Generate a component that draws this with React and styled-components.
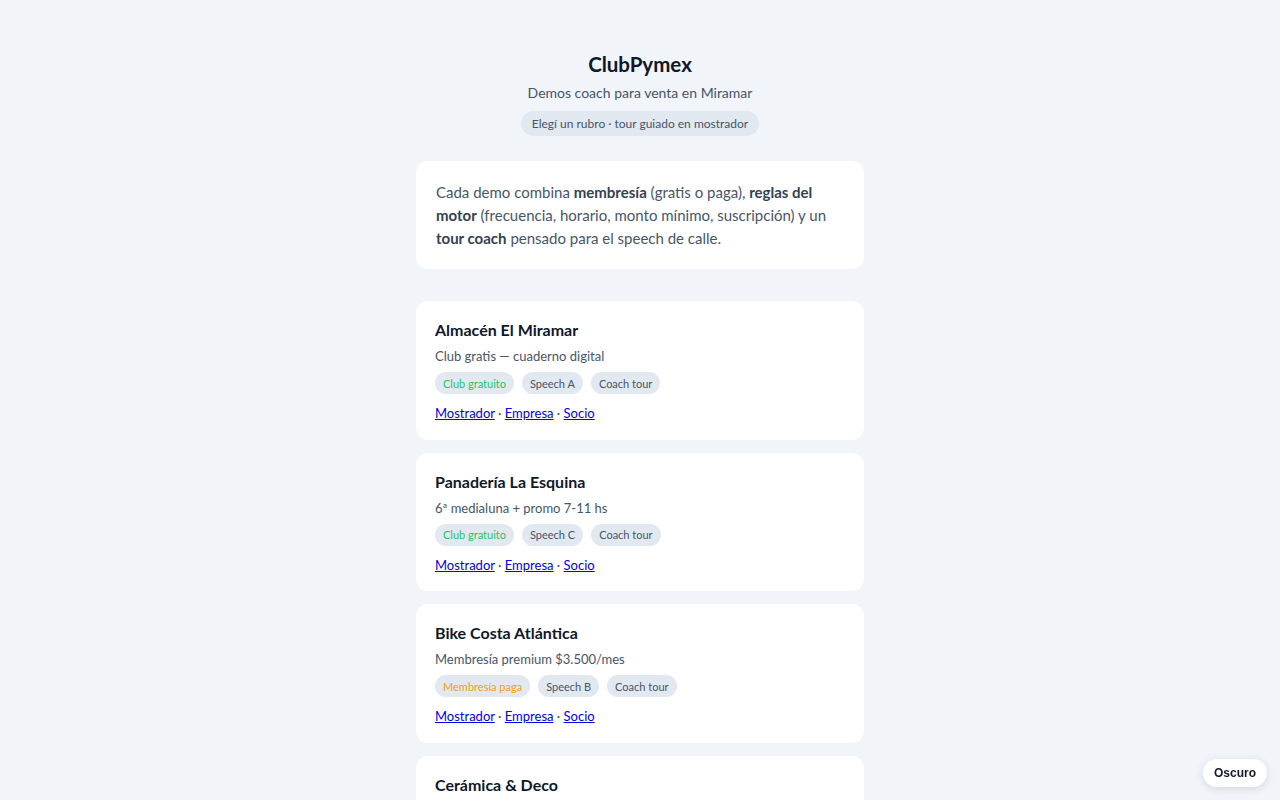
import React from "react";
import styled, { createGlobalStyle } from "styled-components";

const Global = createGlobalStyle`
  html, body { margin: 0; padding: 0; background: #f1f4f9; }
  body { font-family: Lato, "Noto Sans", sans-serif; color: #0f172a; }
`;

const Page = styled.main`
  width: 448px;
  margin: 0 auto;
  padding: 52px 0 40px;
`;

const Header = styled.header`
  display: flex;
  flex-direction: column;
  align-items: center;
`;

const Title = styled.h1`
  margin: 0;
  font-size: 20.5px;
  line-height: 24px;
  font-weight: 700;
  color: #0f172a;
`;

const Subtitle = styled.p`
  margin: 8px 0 0;
  font-size: 14px;
  line-height: 18px;
  color: #475569;
`;

const Pill = styled.span`
  margin-top: 9px;
  height: 25px;
  display: inline-flex;
  align-items: center;
  padding: 0 11px;
  border-radius: 999px;
  background: #e2e8f0;
  color: #475569;
  font-size: 12px;
`;

const Intro = styled.section`
  margin-top: 25px;
  background: #fff;
  border-radius: 12px;
  padding: 20px 20px 19px;
  font-size: 15px;
  line-height: 23px;
  color: #475569;
  b { color: #334155; font-weight: 700; }
`;

const List = styled.div`
  margin-top: 32px;
  display: flex;
  flex-direction: column;
  gap: 13px;
`;

const Card = styled.article`
  background: #fff;
  border-radius: 12px;
  padding: 18px 19px 17.5px;
`;

const CardTitle = styled.h2`
  margin: 0;
  font-size: 16px;
  line-height: 22px;
  font-weight: 700;
  color: #0f172a;
`;

const CardSub = styled.p`
  margin: 6px 0 0;
  font-size: 13px;
  line-height: 18px;
  color: #475569;
`;

const Tags = styled.div`
  margin-top: 7px;
  display: flex;
  gap: 8px;
`;

const toneColor = { green: "#22c55e", orange: "#f59e0b", gray: "#475569" };

const Tag = styled.span`
  height: 22px;
  display: inline-flex;
  align-items: center;
  padding: 0 8px;
  border-radius: 999px;
  background: #e2e8f0;
  font-size: 11px;
  color: ${(p) => toneColor[p.$tone] || toneColor.gray};
`;

const Links = styled.div`
  margin-top: 10px;
  font-size: 13px;
  line-height: 18px;
  color: #475569;
  a { color: #0000ee; text-decoration: underline; }
`;

const ThemeToggle = styled.button`
  position: fixed;
  right: 13px;
  bottom: 13px;
  height: 28px;
  padding: 0 11px;
  border: none;
  border-radius: 999px;
  background: #fff;
  color: #111827;
  font-family: "Liberation Sans", Arial, sans-serif;
  font-weight: 700;
  font-size: 12px;
  box-shadow: 0 2px 8px rgba(15, 23, 42, 0.12);
  cursor: pointer;
`;

const demos = [
  {
    name: "Almacén El Miramar",
    sub: "Club gratis — cuaderno digital",
    tags: [["Club gratuito", "green"], ["Speech A"], ["Coach tour"]],
  },
  {
    name: "Panadería La Esquina",
    sub: "6ª medialuna + promo 7-11 hs",
    tags: [["Club gratuito", "green"], ["Speech C"], ["Coach tour"]],
  },
  {
    name: "Bike Costa Atlántica",
    sub: "Membresía premium $3.500/mes",
    tags: [["Membresía paga", "orange"], ["Speech B"], ["Coach tour"]],
  },
  {
    name: "Cerámica & Deco",
    sub: "Monto mínimo $15.000 por compra",
    tags: [["Club gratuito", "green"], ["Speech A"], ["Coach tour"]],
  },
];

export default function App() {
  return (
    <>
      <Global />
      <Page>
        <Header>
          <Title>ClubPymex</Title>
          <Subtitle>Demos coach para venta en Miramar</Subtitle>
          <Pill>Elegí un rubro · tour guiado en mostrador</Pill>
        </Header>
        <Intro>
          Cada demo combina <b>membresía</b> (gratis o paga), <b>reglas del motor</b>{" "}
          (frecuencia, horario, monto mínimo, suscripción) y un <b>tour coach</b> pensado
          para el speech de calle.
        </Intro>
        <List>
          {demos.map((d) => (
            <Card key={d.name}>
              <CardTitle>{d.name}</CardTitle>
              <CardSub>{d.sub}</CardSub>
              <Tags>
                {d.tags.map(([t, tone]) => (
                  <Tag key={t} $tone={tone}>{t}</Tag>
                ))}
              </Tags>
              <Links>
                <a href="#">Mostrador</a> · <a href="#">Empresa</a> · <a href="#">Socio</a>
              </Links>
            </Card>
          ))}
        </List>
      </Page>
      <ThemeToggle>Oscuro</ThemeToggle>
    </>
  );
}
